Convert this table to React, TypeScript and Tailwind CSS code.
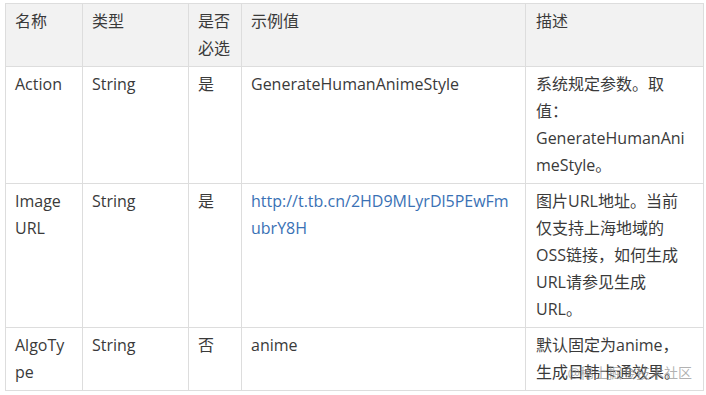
import React from 'react';

interface Row {
  name: string;
  type: string;
  required: string;
  example: string;
  link?: boolean;
  desc: string;
}

const rows: Row[] = [
  {
    name: 'Action',
    type: 'String',
    required: '是',
    example: 'GenerateHumanAnimeStyle',
    desc: '系统规定参数。取值：GenerateHumanAnimeStyle。',
  },
  {
    name: 'Image URL',
    type: 'String',
    required: '是',
    example: 'http://t.tb.cn/2HD9MLyrDl5PEwFmubrY8H',
    link: true,
    desc: '图片URL地址。当前仅支持上海地域的OSS链接，如何生成URL请参见生成URL。',
  },
  {
    name: 'AlgoType',
    type: 'String',
    required: '否',
    example: 'anime',
    desc: '默认固定为anime，生成日韩卡通效果。',
  },
];

// cells wrap like the docs page: words first, then anywhere when a word is too long
const cell = 'border border-[#dddddd] pl-[9px] pr-[9px] pt-[4px] pb-[4px] align-top [overflow-wrap:anywhere]';
const last = 'border border-[#dddddd] pl-[10px] pr-[16px] pt-[4px] pb-[4px] align-top [overflow-wrap:anywhere]';

const App: React.FC = () => {
  return (
    <div
      className="relative w-[706px] h-[395px] bg-white pt-[3px] pl-[5px] text-[16px] leading-[27px] text-[#3a3a3a]"
      style={{ fontFamily: '"Open Sans", "Noto Sans CJK SC", sans-serif' }}
    >
      <table className="table-fixed border-collapse w-[698px]">
        <colgroup>
          <col className="w-[77px]" />
          <col className="w-[106px]" />
          <col className="w-[53px]" />
          <col className="w-[284px]" />
          <col className="w-[178px]" />
        </colgroup>
        <thead>
          <tr className="bg-[#f2f2f2] text-left">
            <th className={`${cell} font-normal`}>名称</th>
            <th className={`${cell} font-normal`}>类型</th>
            <th className={`${cell} font-normal`}>是否必选</th>
            <th className={`${cell} font-normal`}>示例值</th>
            <th className={`${last} font-normal`}>描述</th>
          </tr>
        </thead>
        <tbody>
          {rows.map((r) => (
            <tr key={r.name}>
              <td className={cell}>{r.name}</td>
              <td className={cell}>{r.type}</td>
              <td className={cell}>{r.required}</td>
              <td className={cell}>
                {r.link ? <a className="text-[#3a71b5] break-all">{r.example}</a> : r.example}
              </td>
              <td className={last}>{r.desc}</td>
            </tr>
          ))}
        </tbody>
      </table>
      <div className="absolute right-[14px] bottom-[12px] text-[14px] leading-[20px] text-[#8f8f8f]/70">
        @稀土掘金技术社区
      </div>
    </div>
  );
};

export default App;
